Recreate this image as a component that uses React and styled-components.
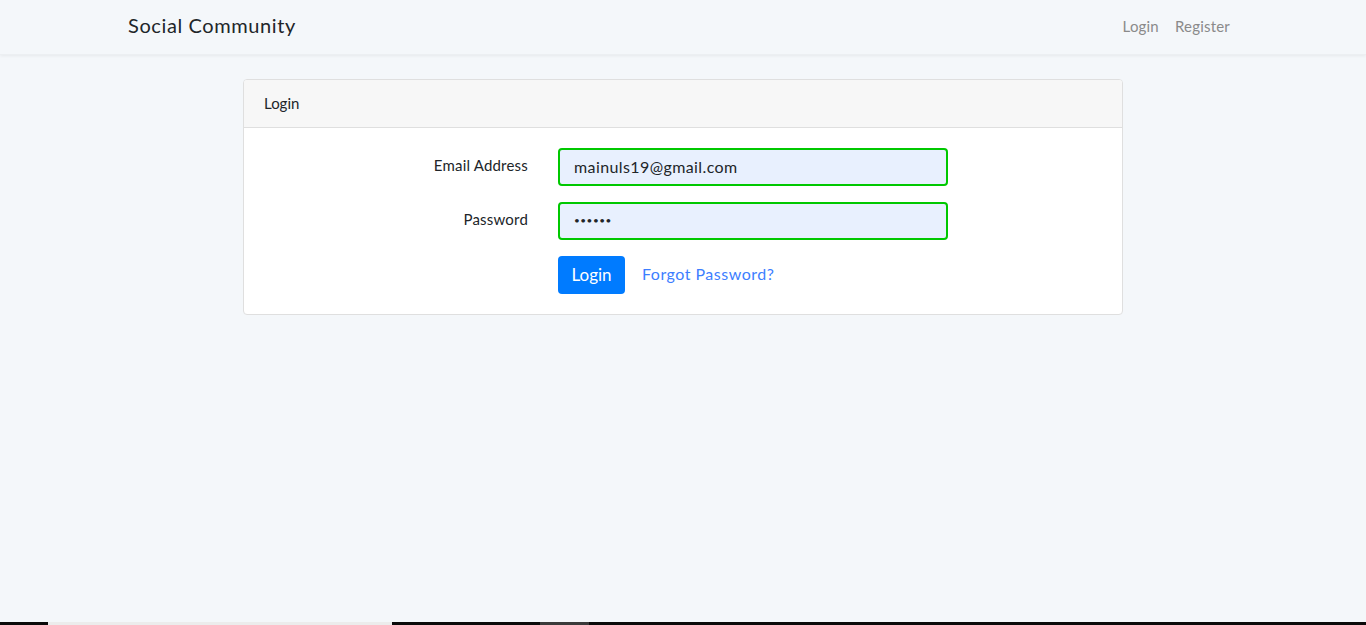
import styled, { createGlobalStyle } from "styled-components";

const GlobalStyle = createGlobalStyle`
  html, body {
    margin: 0;
    padding: 0;
    background-color: #f4f7fa;
    font-family: "Lato", "Open Sans", sans-serif;
    color: #212529;
  }
  * {
    box-sizing: border-box;
  }
`;

export default function App() {
  return (
    <StyledPage>
      <GlobalStyle />
      <StyledNavbar>
        <StyledNavContainer>
          <StyledBrand href="#">Social Community</StyledBrand>
          <StyledNavLinks>
            <StyledNavLink href="#">Login</StyledNavLink>
            <StyledNavLink href="#">Register</StyledNavLink>
          </StyledNavLinks>
        </StyledNavContainer>
      </StyledNavbar>
      <StyledMain>
        <StyledCard>
          <StyledCardHeader>Login</StyledCardHeader>
          <StyledCardBody>
            <StyledFormRow>
              <StyledLabel htmlFor="email">Email Address</StyledLabel>
              <StyledInput id="email" type="email" defaultValue="mainuls19@gmail.com" />
            </StyledFormRow>
            <StyledFormRow>
              <StyledLabel htmlFor="password">Password</StyledLabel>
              <StyledInput id="password" type="password" defaultValue="123456" $masked />
            </StyledFormRow>
            <StyledFormRow>
              <span />
              <StyledActions>
                <StyledButton type="button">Login</StyledButton>
                <StyledLink href="#">Forgot Password?</StyledLink>
              </StyledActions>
            </StyledFormRow>
          </StyledCardBody>
        </StyledCard>
      </StyledMain>
      <StyledTaskbar>
        <StyledTaskItem $width={48} $color="#0a0a0a" />
        <StyledTaskItem $width={344} $color="#ececec" />
        <StyledTaskItem $width={148} $color="#0a0a0a" />
        <StyledTaskItem $width={49} $color="#3a3a3a" />
        <StyledTaskItem $grow $color="#0a0a0a" />
      </StyledTaskbar>
    </StyledPage>
  );
}

const StyledPage = styled.div`
  height: 625px;
  display: flex;
  flex-direction: column;
  overflow: hidden;
`;

const StyledNavbar = styled.nav`
  height: 55px;
  background-color: #f4f7fa;
  box-shadow: 0 1px 3px rgba(0, 0, 0, 0.06);
  border-bottom: 1px solid #eceff2;
  display: flex;
  align-items: center;
`;

const StyledNavContainer = styled.div`
  width: 1140px;
  margin: 0 auto;
  padding: 0 15px;
  display: flex;
  align-items: center;
  justify-content: space-between;
`;

const StyledBrand = styled.a`
  font-size: 20px;
  color: #212529;
  text-decoration: none;
  letter-spacing: 0.6px;
  margin-top: -4px;
`;

const StyledNavLinks = styled.div`
  display: flex;
  margin-top: -2px;
`;

const StyledNavLink = styled.a`
  font-size: 15px;
  color: #8a8a8a;
  text-decoration: none;
  padding: 0 8px;
  letter-spacing: 0.2px;
`;

const StyledMain = styled.main`
  flex: 1;
  padding-top: 24px;
`;

const StyledCard = styled.div`
  width: 880px;
  margin: 0 auto;
  background-color: #ffffff;
  border: 1px solid #dfdfdf;
  border-radius: 4px;
  overflow: hidden;
`;

const StyledCardHeader = styled.div`
  height: 48px;
  padding: 0 20px 1px;
  display: flex;
  align-items: center;
  background-color: #f7f7f7;
  border-bottom: 1px solid #dfdfdf;
  font-size: 15px;
`;

const StyledCardBody = styled.div`
  padding: 20px 0;
  display: flex;
  flex-direction: column;
  gap: 16px;
`;

const StyledFormRow = styled.div`
  display: grid;
  grid-template-columns: 284px 390px;
  column-gap: 30px;
  align-items: center;
`;

const StyledLabel = styled.label`
  text-align: right;
  font-size: 15px;
  align-self: start;
  padding-top: 8px;
  letter-spacing: 0.2px;
`;

const StyledInput = styled.input`
  height: 38px;
  width: 390px;
  padding: 0 14px 2px;
  border: 2px solid #00c800;
  border-radius: 4px;
  background-color: #e8f0fe;
  font-family: "Lato", "Open Sans", sans-serif;
  font-size: ${(p) => (p.$masked ? "10px" : "16px")};
  letter-spacing: ${(p) => (p.$masked ? "0.5px" : "0.4px")};
  color: #212529;
  outline: none;
`;

const StyledActions = styled.div`
  display: flex;
  align-items: center;
  gap: 17px;
`;

const StyledButton = styled.button`
  height: 38px;
  width: 67px;
  padding: 0 0 2px;
  border: none;
  border-radius: 4px;
  background-color: #007bff;
  color: #ffffff;
  font-family: "Lato", "Open Sans", sans-serif;
  font-size: 17px;
  cursor: pointer;
`;

const StyledLink = styled.a`
  font-size: 16px;
  color: #3d7eff;
  text-decoration: none;
  letter-spacing: 0.5px;
  margin-top: -4px;
`;

const StyledTaskbar = styled.div`
  height: 3px;
  display: flex;
`;

const StyledTaskItem = styled.div`
  width: ${(p) => (p.$grow ? "auto" : `${p.$width}px`)};
  flex: ${(p) => (p.$grow ? 1 : "none")};
  background-color: ${(p) => p.$color};
`;
